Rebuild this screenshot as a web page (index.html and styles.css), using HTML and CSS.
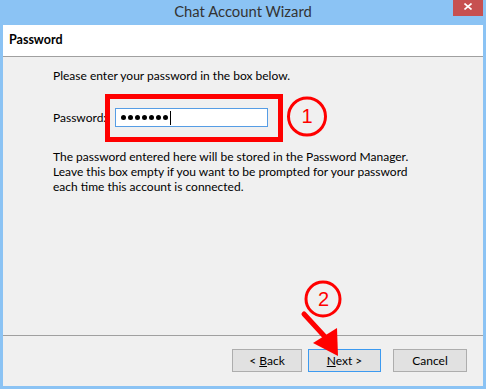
FILE: index.html
```html
<!DOCTYPE html>
<html>
<head>
<meta charset="utf-8">
<link rel="stylesheet" href="styles.css">
</head>
<body>
<div class="window">
  <div class="titlebar">
    <span class="spacer"></span>
    <div class="title">Chat Account Wizard</div>
    <div class="close-wrap">
      <div class="close">
        <svg width="8" height="7" viewBox="0 0 8 7"><path d="M0.5 0.5 L7.5 6.5 M7.5 0.5 L0.5 6.5" stroke="#fff" stroke-width="1.6" fill="none"/></svg>
      </div>
    </div>
  </div>
  <div class="client">
    <div class="header">Password</div>
    <div class="content">
      <p class="intro">Please enter your password in the box below.</p>
      <div class="field-row">
        <label class="label">Password:</label>
        <div class="input">
          <span class="dot"></span><span class="dot"></span><span class="dot"></span><span class="dot"></span><span class="dot"></span><span class="dot"></span><span class="dot"></span><span class="caret"></span>
        </div>
      </div>
      <p class="note">The password entered here will be stored in the Password Manager.<br>Leave this box empty if you want to be prompted for your password<br>each time this account is connected.</p>
    </div>
    <div class="footer">
      <button class="btn btn-back">&lt; <u>B</u>ack</button>
      <button class="btn btn-next"><u>N</u>ext &gt;</button>
      <button class="btn btn-cancel">Cancel</button>
    </div>
  </div>
  <svg class="annot" width="486" height="389" viewBox="0 0 486 389">
    <rect x="107.5" y="96.5" width="173" height="43" fill="none" stroke="#ff0000" stroke-width="5"/>
    <circle cx="307" cy="116.5" r="18.5" fill="none" stroke="#ff0000" stroke-width="3"/>
    <text x="307" y="123" class="num">1</text>
    <circle cx="323" cy="299" r="17" fill="none" stroke="#ff0000" stroke-width="3"/>
    <text x="323.5" y="306" class="num">2</text>
    <line x1="304" y1="314" x2="327" y2="339" stroke="#ff0000" stroke-width="5" stroke-linecap="round"/>
    <polygon points="313,343 337,328 338,356" fill="#ff0000"/>
  </svg>
</div>
</body>
</html>
```
FILE: styles.css
```css
html, body {
  margin: 0;
  padding: 0;
}
body {
  width: 486px;
  height: 389px;
  overflow: hidden;
  font-family: "Lato", "Liberation Sans", sans-serif;
  font-size: 12px;
  color: #000;
}
.window {
  position: relative;
  width: 486px;
  height: 389px;
  background: #8bc3f4;
  display: flex;
  flex-direction: column;
}
.titlebar {
  height: 25px;
  display: grid;
  grid-template-columns: 1fr auto 1fr;
  align-items: start;
}
.title {
  font-size: 14.8px;
  line-height: 22px;
  color: #333;
  text-align: center;
}
.close-wrap {
  justify-self: end;
  margin-right: 3px;
}
.close {
  width: 30px;
  height: 16px;
  background: #c75050;
  display: flex;
  justify-content: center;
  padding-top: 3px;
  box-sizing: border-box;
}
.close svg {
  display: block;
}
.client {
  flex: 1;
  margin: 0 3px 3px 3px;
  background: #f0f0f0;
  display: flex;
  flex-direction: column;
}
.header {
  height: 32px;
  box-sizing: border-box;
  background: #fff;
  border-bottom: 1px solid #a0a0a0;
  padding: 7px 6px 0;
  font-weight: bold;
  line-height: 15px;
  font-size: 12.5px;
}
.content {
  flex: 1;
  padding: 11px 0 0 50px;
}
.intro {
  margin: 0;
  line-height: 15px;
}
.field-row {
  display: flex;
  align-items: center;
  margin-top: 25px;
}
.label {
  width: 62px;
  line-height: 15px;
}
.input {
  width: 153px;
  height: 19px;
  box-sizing: border-box;
  border: 1px solid #569de5;
  background: #fff;
  display: flex;
  align-items: center;
  padding-left: 5px;
  gap: 2px;
}
.dot {
  width: 5px;
  height: 5px;
  border-radius: 50%;
  background: #000;
}
.caret {
  width: 1px;
  height: 14px;
  background: #000;
}
.note {
  margin: 22px 0 0;
  line-height: 15px;
}
.footer {
  height: 51px;
  box-sizing: border-box;
  border-top: 1px solid #a0a0a0;
  display: flex;
  justify-content: flex-end;
  align-items: flex-start;
  padding: 13px 16px 0 0;
}
.btn {
  height: 23px;
  border: 1px solid #adadad;
  background: #e1e1e1;
  font-family: inherit;
  font-size: 12px;
  color: #000;
  padding: 0;
  margin: 0;
}
.btn-back {
  width: 70px;
}
.btn-next {
  width: 73px;
  margin-left: 6px;
  border-color: #3c9af0;
}
.btn-cancel {
  width: 74px;
  margin-left: 12px;
}
.annot {
  position: absolute;
  left: 0;
  top: 0;
  pointer-events: none;
}
.num {
  font-family: "Liberation Sans", sans-serif;
  font-size: 20px;
  fill: #ff0000;
  text-anchor: middle;
}
```
